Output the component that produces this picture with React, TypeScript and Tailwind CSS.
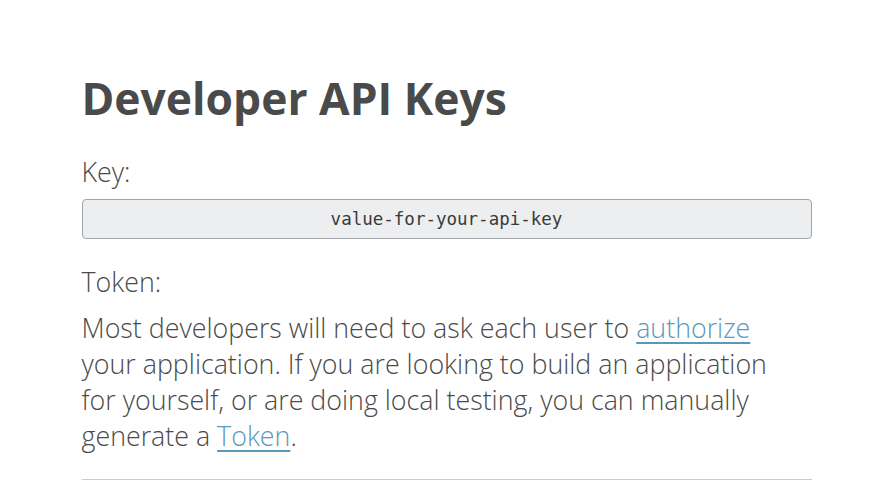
export default function App() {
  return (
    <div className="min-h-screen bg-white">
      <div className="mx-auto w-[730px] pt-[66px] font-['Open_Sans',sans-serif] text-[#4a4a4a]">
        <h1 className="text-[44.4px] font-bold leading-[64px]">Developer API Keys</h1>
        <p className="mt-[24px] text-[26.8px] font-light leading-[36px]">Key:</p>
        <div className="mt-[9px] flex h-[40px] items-center justify-center rounded-[4px] border border-[#a3a7ab] bg-[#eceef0] font-['DejaVu_Sans_Mono',monospace] text-[17.5px] text-[#3a3a3a]">
          value-for-your-api-key
        </div>
        <p className="mt-[25px] text-[26.8px] font-light leading-[36px]">Token:</p>
        <p className="mt-[10px] text-[26.8px] font-light leading-[36px]">
          Most developers will need to ask each user to{" "}
          <a href="#" className="text-[#5b97bd] underline underline-offset-4">authorize</a>
          <br />
          your application. If you are looking to build an application
          <br />
          for yourself, or are doing local testing, you can manually
          <br />
          generate a <a href="#" className="text-[#5b97bd] underline underline-offset-4">Token</a>.
        </p>
        <hr className="mt-[25px] border-t border-[#cccccc]" />
      </div>
    </div>
  );
}
